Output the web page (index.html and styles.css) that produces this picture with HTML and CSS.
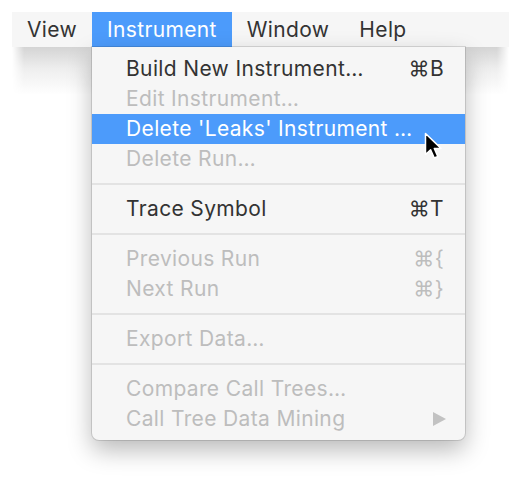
FILE: index.html
```html
<!DOCTYPE html>
<html>
<head>
<meta charset="utf-8">
<link rel="stylesheet" href="styles.css">
</head>
<body>
<div class="stage">
  <div class="menubar">
    <div class="mb-item">View</div>
    <div class="mb-item active">Instrument
      <div class="menu">
        <div class="row"><span>Build New Instrument…</span><span class="key">⌘B</span></div>
        <div class="row off"><span>Edit Instrument…</span></div>
        <div class="row sel"><span>Delete 'Leaks' Instrument …</span></div>
        <div class="row off"><span>Delete Run…</span></div>
        <div class="sep"></div>
        <div class="row"><span>Trace Symbol</span><span class="key">⌘T</span></div>
        <div class="sep"></div>
        <div class="row off"><span>Previous Run</span><span class="key">⌘{</span></div>
        <div class="row off"><span>Next Run</span><span class="key">⌘}</span></div>
        <div class="sep"></div>
        <div class="row off"><span>Export Data…</span></div>
        <div class="sep"></div>
        <div class="row off"><span>Compare Call Trees…</span></div>
        <div class="row off"><span>Call Tree Data Mining</span><span class="arrow"></span></div>
        <svg class="cursor" width="22" height="30" viewBox="0 0 22 30">
          <path d="M1.5 1.5 L1.5 22.5 L6.6 17.8 L10.3 26 L13.8 24.5 L10.3 16.4 L17 16.4 Z" fill="#000" stroke="#fff" stroke-width="1.5" stroke-linejoin="round"/>
        </svg>
      </div>
    </div>
    <div class="mb-item">Window</div>
    <div class="mb-item">Help</div>
  </div>
  <div class="bar-shadow"></div>
</div>
</body>
</html>
```

FILE: styles.css
```css
html, body {
  margin: 0;
  padding: 0;
  background: #ffffff;
}
body {
  padding: 12px;
  min-height: 482px;
  box-sizing: border-box;
  font-family: Inter, "Liberation Sans", sans-serif;
  font-size: 21px;
  letter-spacing: 0.35px;
  color: #333333;
}
.stage {
  width: 497px;
  height: 458px;
}
.menubar {
  display: flex;
  height: 35px;
  background: #f6f6f6;
  position: relative;
  z-index: 2;
}
.mb-item {
  position: relative;
  padding: 0 15px;
  line-height: 35px;
  color: #333;
}
.mb-item.active {
  background: #4c9bfb;
  color: #ffffff;
}
.bar-shadow {
  height: 48px;
  background: linear-gradient(#d4d4d4, #eeeeee 45%, #ffffff);
  -webkit-mask-image: linear-gradient(90deg, transparent, #000 12px, #000 calc(100% - 12px), transparent);
  mask-image: linear-gradient(90deg, transparent, #000 12px, #000 calc(100% - 12px), transparent);
}
.menu {
  position: absolute;
  top: 35px;
  left: 0;
  width: 373px;
  box-sizing: border-box;
  padding: 7px 0 6px;
  background: #f6f6f6;
  border-radius: 0 0 7px 7px;
  box-shadow: 0 0 0 1px rgba(0,0,0,0.12), 0 10px 24px rgba(0,0,0,0.28);
  color: #333;
  line-height: 30px;
}
.row {
  height: 30px;
  display: flex;
  justify-content: space-between;
  align-items: center;
  padding: 0 21px 0 34px;
  white-space: nowrap;
}
.row.off {
  color: #bdbdbd;
}
.row.sel {
  background: #4c9bfb;
  color: #ffffff;
}
.sep {
  height: 2px;
  margin: 9px 0;
  background: #e3e3e3;
}
.arrow {
  width: 0;
  height: 0;
  border-top: 7px solid transparent;
  border-bottom: 7px solid transparent;
  border-left: 13px solid #c2c2c2;
  margin-right: -2px;
}
.cursor {
  position: absolute;
  left: 332px;
  top: 85px;
}
```
